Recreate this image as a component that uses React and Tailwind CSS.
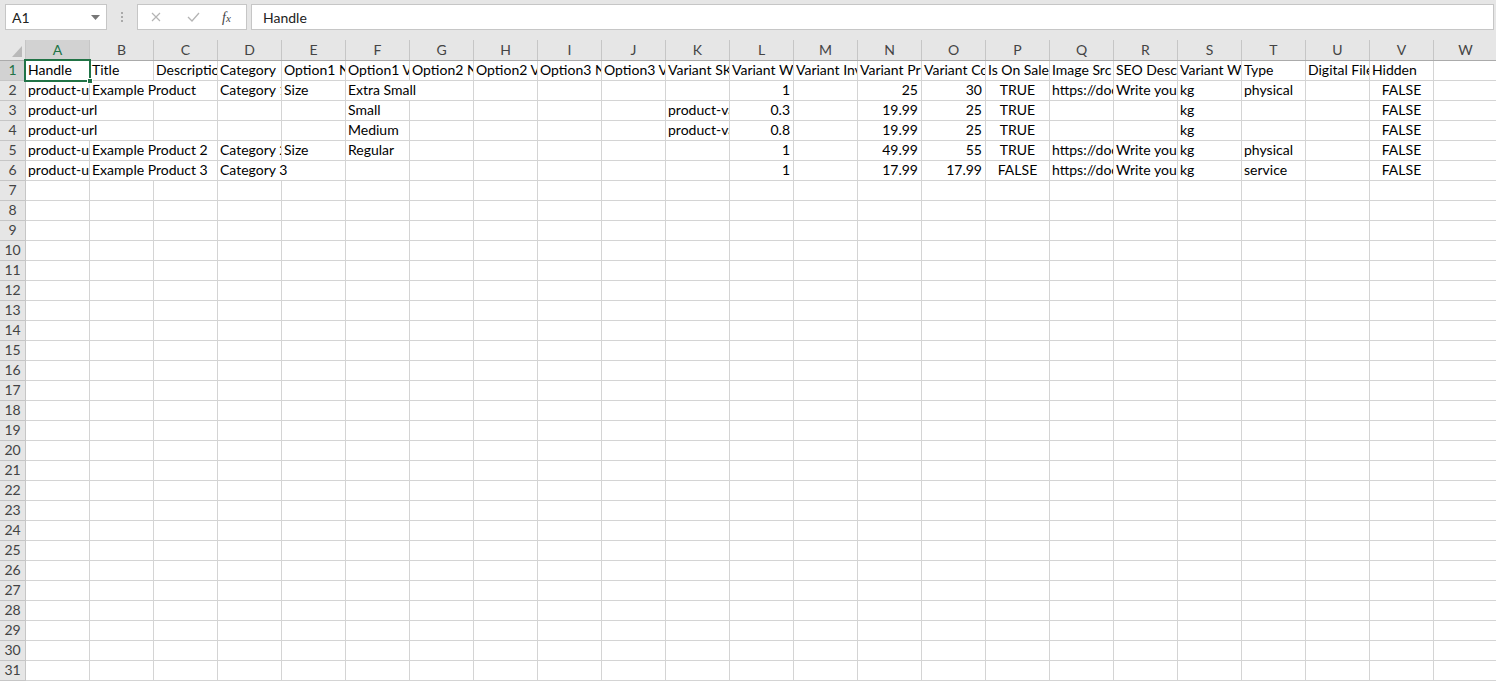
import React from 'react';

const COLS = 'ABCDEFGHIJKLMNOPQRSTUVW'.split('');
const W = { 1: 'w-[64px]', 2: 'w-[128px]' };

// cells keyed by column index; s = span (text spilling into empty cells), a = align
const rows = [
    {
        0: 'Handle', 1: 'Title', 2: 'Description', 3: 'Category', 4: 'Option1 Name', 5: 'Option1 Value',
        6: 'Option2 Name', 7: 'Option2 Value', 8: 'Option3 Name', 9: 'Option3 Value', 10: 'Variant SKU',
        11: 'Variant Weight', 12: 'Variant Inventory', 13: 'Variant Price', 14: 'Variant Compare At Price',
        15: 'Is On Sale', 16: 'Image Src', 17: 'SEO Description', 18: 'Variant Weight Unit', 19: 'Type',
        20: 'Digital File', 21: 'Hidden',
    },
    {
        0: 'product-url', 1: { t: 'Example Product', s: 2 }, 3: 'Category 1', 4: 'Size', 5: { t: 'Extra Small', s: 2 },
        11: { t: '1', a: 'r' }, 13: { t: '25', a: 'r' }, 14: { t: '30', a: 'r' }, 15: { t: 'TRUE', a: 'c' },
        16: 'https://docs.example.com/image.jpg', 17: 'Write your SEO description', 18: 'kg', 19: 'physical',
        21: { t: 'FALSE', a: 'c' },
    },
    {
        0: { t: 'product-url', s: 2 }, 5: 'Small', 10: 'product-variant-sku', 11: { t: '0.3', a: 'r' },
        13: { t: '19.99', a: 'r' }, 14: { t: '25', a: 'r' }, 15: { t: 'TRUE', a: 'c' }, 18: 'kg',
        21: { t: 'FALSE', a: 'c' },
    },
    {
        0: { t: 'product-url', s: 2 }, 5: 'Medium', 10: 'product-variant-sku', 11: { t: '0.8', a: 'r' },
        13: { t: '19.99', a: 'r' }, 14: { t: '25', a: 'r' }, 15: { t: 'TRUE', a: 'c' }, 18: 'kg',
        21: { t: 'FALSE', a: 'c' },
    },
    {
        0: 'product-url', 1: { t: 'Example Product 2', s: 2 }, 3: 'Category 2', 4: 'Size', 5: 'Regular',
        11: { t: '1', a: 'r' }, 13: { t: '49.99', a: 'r' }, 14: { t: '55', a: 'r' }, 15: { t: 'TRUE', a: 'c' },
        16: 'https://docs.example.com/image.jpg', 17: 'Write your SEO description', 18: 'kg', 19: 'physical',
        21: { t: 'FALSE', a: 'c' },
    },
    {
        0: 'product-url', 1: { t: 'Example Product 3', s: 2 }, 3: { t: 'Category 3', s: 2 },
        11: { t: '1', a: 'r' }, 13: { t: '17.99', a: 'r' }, 14: { t: '17.99', a: 'r' }, 15: { t: 'FALSE', a: 'c' },
        16: 'https://docs.example.com/image.jpg', 17: 'Write your SEO description', 18: 'kg', 19: 'service',
        21: { t: 'FALSE', a: 'c' },
    },
];

const ALIGN = { l: 'text-left pl-[2px]', r: 'text-right pr-[3px]', c: 'text-center' };

function buildCells(row) {
    const out = [];
    let i = 0;
    while (i < COLS.length) {
        const raw = row && row[i];
        if (raw) {
            const cell = typeof raw === 'string' ? { t: raw } : raw;
            out.push({ ...cell, s: cell.s || 1, a: cell.a || 'l', key: i });
            i += cell.s || 1;
        } else {
            out.push({ t: '', s: 1, a: 'l', key: i });
            i += 1;
        }
    }
    return out;
}

function Row({ n, data }) {
    const cells = buildCells(data);
    const selected = n === 1;
    return (
        <div className="flex h-[20px] shrink-0">
            <div className={`w-[26px] shrink-0 border-r border-b border-[#c6c6c6] text-center text-[14px] leading-[18px] ${selected ? 'bg-[#d2d2d2] text-[#217346]' : 'bg-[#e6e6e6] text-[#444]'}`}>
                {n}
            </div>
            {cells.map(c => (
                <div
                    key={c.key}
                    className={`${W[c.s]} shrink-0 border-r border-b border-[#d4d4d4] overflow-hidden whitespace-nowrap text-[14px] leading-[18px] text-black ${ALIGN[c.a]}`}
                >{c.t}</div>
            ))}
        </div>
    );
}

function TopBar() {
    return (
        <div className="h-[40px] shrink-0 bg-[#e6e6e6] flex items-start pt-[4px] pl-[5px] pr-[2px] gap-0">
            <div className="w-[102px] h-[26px] bg-white border border-[#c6c6c6] flex items-center justify-between pl-[6px] pr-[6px]">
                <span className="text-[14px] text-[#222]">A1</span>
                <svg width="9" height="5" viewBox="0 0 9 5"><path d="M0 0h9L4.5 5z" fill="#777" /></svg>
            </div>
            <div className="w-[30px] h-[26px] flex flex-col items-center justify-center gap-[2px]">
                <span className="w-[2px] h-[2px] bg-[#aaa]" />
                <span className="w-[2px] h-[2px] bg-[#aaa]" />
                <span className="w-[2px] h-[2px] bg-[#aaa]" />
            </div>
            <div className="w-[110px] h-[26px] bg-white border border-[#c6c6c6] flex items-center pl-[13px]">
                <svg width="10" height="10" viewBox="0 0 10 10"><path d="M1 1l8 8M9 1l-8 8" stroke="#b4b4b4" strokeWidth="1.2" /></svg>
                <svg className="ml-[26px]" width="13" height="10" viewBox="0 0 13 10"><path d="M1 5l4 4 7-8" stroke="#b4b4b4" strokeWidth="1.3" fill="none" /></svg>
                <span className="ml-[22px] text-[14px] italic text-[#444]" style={{ fontFamily: '"Liberation Serif", serif' }}>
                    f<span className="text-[11px]">x</span>
                </span>
            </div>
            <div className="flex-1 h-[26px] ml-[4px] bg-white border border-[#c6c6c6] flex items-center pl-[11px]">
                <span className="text-[14px] text-[#222]">Handle</span>
            </div>
        </div>
    );
}

function ColumnHeader() {
    return (
        <div className="flex h-[21px] shrink-0 bg-[#e6e6e6] border-b border-[#ababab]">
            <div className="w-[26px] shrink-0 border-r border-[#c6c6c6] flex items-end justify-end pr-[3px] pb-[3px]">
                <svg width="10" height="11" viewBox="0 0 10 11"><path d="M10 0v11H0z" fill="#b9b9b9" /></svg>
            </div>
            {COLS.map((c, i) => (
                <div
                    key={c}
                    className={`w-[64px] shrink-0 border-r border-[#c6c6c6] text-center text-[14px] leading-[19px] ${i === 0 ? 'bg-[#d2d2d2] text-[#217346]' : 'text-[#444]'}`}
                >{c}</div>
            ))}
        </div>
    );
}

export default function App() {
    const body = [];
    for (let n = 1; n <= 31; n++) body.push(<Row key={n} n={n} data={rows[n - 1]} />);

    return (
        <div className="w-[1496px] h-[682px] overflow-hidden bg-white flex flex-col" style={{ fontFamily: 'Lato, "Noto Sans", sans-serif' }}>
            <TopBar />
            <ColumnHeader />
            <div className="relative flex flex-col">
                {body}
                {/* active cell A1 */}
                <div className="absolute left-[24px] top-[-2px] w-[67px] h-[23px] border-2 border-[#217346] pointer-events-none">
                    <div className="absolute right-[-4px] bottom-[-4px] w-[6px] h-[6px] bg-[#217346] border border-white" />
                </div>
            </div>
        </div>
    );
}
